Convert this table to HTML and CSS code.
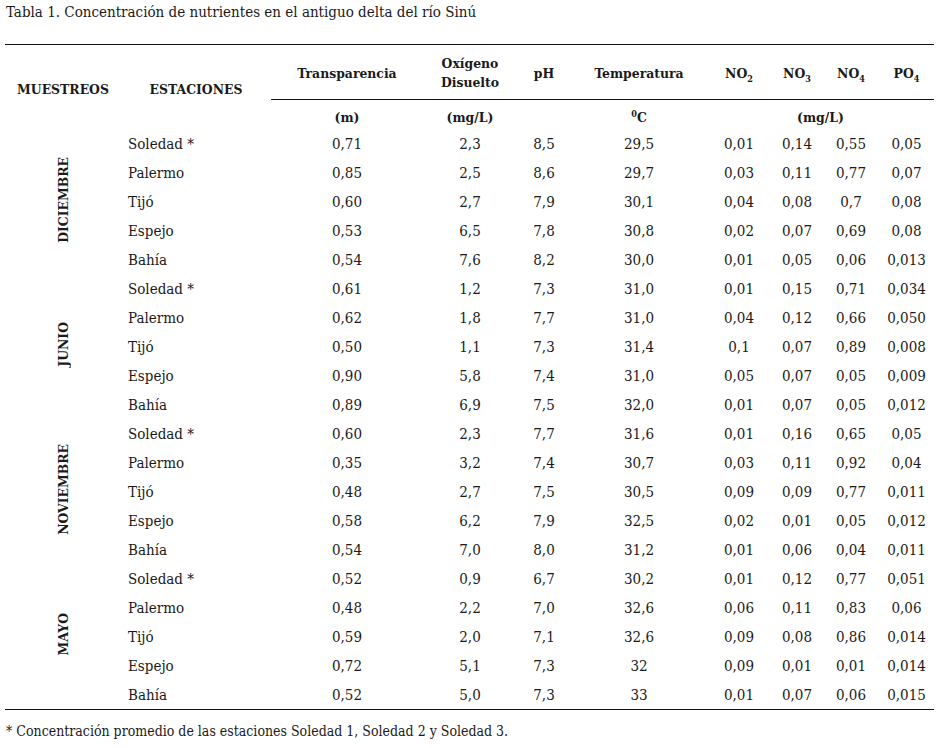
FILE: index.html
```html
<!DOCTYPE html>
<html lang="es">
<head>
<meta charset="utf-8">
<title>Tabla 1</title>
<link rel="stylesheet" href="styles.css">
</head>
<body>
<div class="page">
  <p class="caption">Tabla 1. Concentración de nutrientes en el antiguo delta del río Sinú</p>
  <table class="data">
    <colgroup>
      <col class="c-mues"><col class="c-est"><col class="c-tr"><col class="c-ox"><col class="c-ph"><col class="c-temp"><col class="c-no2"><col class="c-no3"><col class="c-no4"><col class="c-po4">
    </colgroup>
    <thead>
      <tr class="h1">
        <th rowspan="2" class="side">MUESTREOS</th>
        <th rowspan="2" class="side">ESTACIONES</th>
        <th class="u">Transparencia</th>
        <th class="u">Oxígeno<br>Disuelto</th>
        <th class="u">pH</th>
        <th class="u">Temperatura</th>
        <th class="u">NO<sub>2</sub></th>
        <th class="u">NO<sub>3</sub></th>
        <th class="u">NO<sub>4</sub></th>
        <th class="u">PO<sub>4</sub></th>
      </tr>
      <tr class="h2">
        <th>(m)</th>
        <th>(mg/L)</th>
        <th></th>
        <th><sup>0</sup>C</th>
        <th colspan="4">(mg/L)</th>
      </tr>
    </thead>
    <tbody>
      <tr><td rowspan="5" class="month"><span>DICIEMBRE</span></td><td class="st">Soledad *</td><td>0,71</td><td>2,3</td><td>8,5</td><td>29,5</td><td>0,01</td><td>0,14</td><td>0,55</td><td>0,05</td></tr>
      <tr><td class="st">Palermo</td><td>0,85</td><td>2,5</td><td>8,6</td><td>29,7</td><td>0,03</td><td>0,11</td><td>0,77</td><td>0,07</td></tr>
      <tr><td class="st">Tijó</td><td>0,60</td><td>2,7</td><td>7,9</td><td>30,1</td><td>0,04</td><td>0,08</td><td>0,7</td><td>0,08</td></tr>
      <tr><td class="st">Espejo</td><td>0,53</td><td>6,5</td><td>7,8</td><td>30,8</td><td>0,02</td><td>0,07</td><td>0,69</td><td>0,08</td></tr>
      <tr><td class="st">Bahía</td><td>0,54</td><td>7,6</td><td>8,2</td><td>30,0</td><td>0,01</td><td>0,05</td><td>0,06</td><td>0,013</td></tr>
      <tr><td rowspan="5" class="month"><span>JUNIO</span></td><td class="st">Soledad *</td><td>0,61</td><td>1,2</td><td>7,3</td><td>31,0</td><td>0,01</td><td>0,15</td><td>0,71</td><td>0,034</td></tr>
      <tr><td class="st">Palermo</td><td>0,62</td><td>1,8</td><td>7,7</td><td>31,0</td><td>0,04</td><td>0,12</td><td>0,66</td><td>0,050</td></tr>
      <tr><td class="st">Tijó</td><td>0,50</td><td>1,1</td><td>7,3</td><td>31,4</td><td>0,1</td><td>0,07</td><td>0,89</td><td>0,008</td></tr>
      <tr><td class="st">Espejo</td><td>0,90</td><td>5,8</td><td>7,4</td><td>31,0</td><td>0,05</td><td>0,07</td><td>0,05</td><td>0,009</td></tr>
      <tr><td class="st">Bahía</td><td>0,89</td><td>6,9</td><td>7,5</td><td>32,0</td><td>0,01</td><td>0,07</td><td>0,05</td><td>0,012</td></tr>
      <tr><td rowspan="5" class="month"><span>NOVIEMBRE</span></td><td class="st">Soledad *</td><td>0,60</td><td>2,3</td><td>7,7</td><td>31,6</td><td>0,01</td><td>0,16</td><td>0,65</td><td>0,05</td></tr>
      <tr><td class="st">Palermo</td><td>0,35</td><td>3,2</td><td>7,4</td><td>30,7</td><td>0,03</td><td>0,11</td><td>0,92</td><td>0,04</td></tr>
      <tr><td class="st">Tijó</td><td>0,48</td><td>2,7</td><td>7,5</td><td>30,5</td><td>0,09</td><td>0,09</td><td>0,77</td><td>0,011</td></tr>
      <tr><td class="st">Espejo</td><td>0,58</td><td>6,2</td><td>7,9</td><td>32,5</td><td>0,02</td><td>0,01</td><td>0,05</td><td>0,012</td></tr>
      <tr><td class="st">Bahía</td><td>0,54</td><td>7,0</td><td>8,0</td><td>31,2</td><td>0,01</td><td>0,06</td><td>0,04</td><td>0,011</td></tr>
      <tr><td rowspan="5" class="month"><span>MAYO</span></td><td class="st">Soledad *</td><td>0,52</td><td>0,9</td><td>6,7</td><td>30,2</td><td>0,01</td><td>0,12</td><td>0,77</td><td>0,051</td></tr>
      <tr><td class="st">Palermo</td><td>0,48</td><td>2,2</td><td>7,0</td><td>32,6</td><td>0,06</td><td>0,11</td><td>0,83</td><td>0,06</td></tr>
      <tr><td class="st">Tijó</td><td>0,59</td><td>2,0</td><td>7,1</td><td>32,6</td><td>0,09</td><td>0,08</td><td>0,86</td><td>0,014</td></tr>
      <tr><td class="st">Espejo</td><td>0,72</td><td>5,1</td><td>7,3</td><td>32</td><td>0,09</td><td>0,01</td><td>0,01</td><td>0,014</td></tr>
      <tr><td class="st">Bahía</td><td>0,52</td><td>5,0</td><td>7,3</td><td>33</td><td>0,01</td><td>0,07</td><td>0,06</td><td>0,015</td></tr>
    </tbody>
  </table>
  <p class="note">* Concentración promedio de las estaciones Soledad 1, Soledad 2 y Soledad 3.</p>
</div>
</body>
</html>
```

FILE: styles.css
```css
html, body {
  margin: 0;
  padding: 0;
  background: #fff;
}
body {
  font-family: "DejaVu Serif Condensed", "DejaVu Serif", "Liberation Serif", serif;
  font-stretch: condensed;
  color: #1a1a1a;
}
.page {
  padding: 3px 0 0 5px;
  width: 929px;
}
.caption {
  margin: 0 0 0 1px;
  font-size: 15px;
  line-height: 18px;
}
.data {
  margin-top: 23px;
  border-collapse: collapse;
  table-layout: fixed;
  width: 929px;
  border-top: 1.5px solid #111;
  border-bottom: 1.5px solid #111;
  font-size: 15px;
}
.c-mues { width: 116px; }
.c-est { width: 150px; }
.c-tr { width: 152px; }
.c-ox { width: 94px; }
.c-ph { width: 54px; }
.c-temp { width: 136px; }
.c-no2 { width: 64px; }
.c-no3 { width: 52px; }
.c-no4 { width: 56px; }
.c-po4 { width: 55px; }
th, td {
  padding: 0;
  text-align: center;
  vertical-align: middle;
}
th {
  font-weight: bold;
  font-size: 13.8px;
  line-height: 19px;
}
.h1 th.u {
  height: 52px;
  border-bottom: 1.5px solid #111;
  padding-top: 2px;
}
.h2 th {
  height: 23px;
  padding-top: 6px;
}
th.side {
  padding-top: 4px;
}
sub {
  font-size: 9px;
  vertical-align: -4px;
  line-height: 0;
}
sup {
  font-size: 9px;
  vertical-align: 5px;
  line-height: 0;
}
td {
  height: 29px;
  line-height: 18px;
}
td.st {
  text-align: left;
  padding-left: 7px;
}
td.month span {
  display: inline-block;
  writing-mode: vertical-rl;
  transform: rotate(180deg);
  font-weight: bold;
  font-size: 13.8px;
}
.note {
  margin: 12px 0 0 1px;
  font-size: 14px;
  line-height: 18px;
}
```
